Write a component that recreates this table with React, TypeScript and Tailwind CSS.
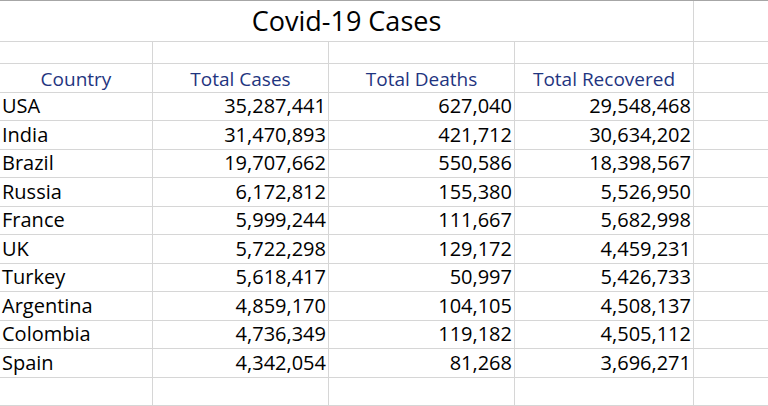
import React from "react";

const rows: [string, string, string, string][] = [
  ["USA", "35,287,441", "627,040", "29,548,468"],
  ["India", "31,470,893", "421,712", "30,634,202"],
  ["Brazil", "19,707,662", "550,586", "18,398,567"],
  ["Russia", "6,172,812", "155,380", "5,526,950"],
  ["France", "5,999,244", "111,667", "5,682,998"],
  ["UK", "5,722,298", "129,172", "4,459,231"],
  ["Turkey", "5,618,417", "50,997", "5,426,733"],
  ["Argentina", "4,859,170", "104,105", "4,508,137"],
  ["Colombia", "4,736,349", "119,182", "4,505,112"],
  ["Spain", "4,342,054", "81,268", "3,696,271"],
];

const headers = ["Country", "Total Cases", "Total Deaths", "Total Recovered"];

export default function App() {
  return (
    <div
      className="w-[768px] h-[406px] overflow-hidden bg-white"
      style={{ fontFamily: '"Open Sans", sans-serif' }}
    >
      <div className="border-t border-[#a6a6a6] bg-[#d6d6d6] pb-px grid gap-px grid-cols-[152px_175px_185px_178px_1fr] grid-rows-[40px_21px_28px_27px_28px_27px_28px_27px_28px_27px_28px_27px_28px_27px]">
        {/* Title row */}
        <div className="col-span-4 bg-white flex items-end justify-center text-[27px] text-black">
          Covid-19 Cases
        </div>
        <div className="bg-white" />

        {/* Blank row */}
        {[0, 1, 2, 3, 4].map((i) => (
          <div key={"b" + i} className="bg-white" />
        ))}

        {/* Header row */}
        {headers.map((h) => (
          <div
            key={h}
            className="bg-white flex items-end justify-center text-[19px] leading-[25px] text-[#1f3580] whitespace-nowrap"
          >
            {h}
          </div>
        ))}
        <div className="bg-white" />

        {/* Data rows */}
        {rows.map((r) => (
          <React.Fragment key={r[0]}>
            <div className="bg-white flex items-end pl-[2px] text-[20px] leading-[28px] text-black whitespace-nowrap">
              {r[0]}
            </div>
            <div className="bg-white flex items-end justify-end pr-[2px] text-[20px] leading-[28px] text-black whitespace-nowrap">
              {r[1]}
            </div>
            <div className="bg-white flex items-end justify-end pr-[2px] text-[20px] leading-[28px] text-black whitespace-nowrap">
              {r[2]}
            </div>
            <div className="bg-white flex items-end justify-end pr-[2px] text-[20px] leading-[28px] text-black whitespace-nowrap">
              {r[3]}
            </div>
            <div className="bg-white" />
          </React.Fragment>
        ))}

        {/* Blank row */}
        {[0, 1, 2, 3, 4].map((i) => (
          <div key={"e" + i} className="bg-white" />
        ))}
      </div>
    </div>
  );
}
